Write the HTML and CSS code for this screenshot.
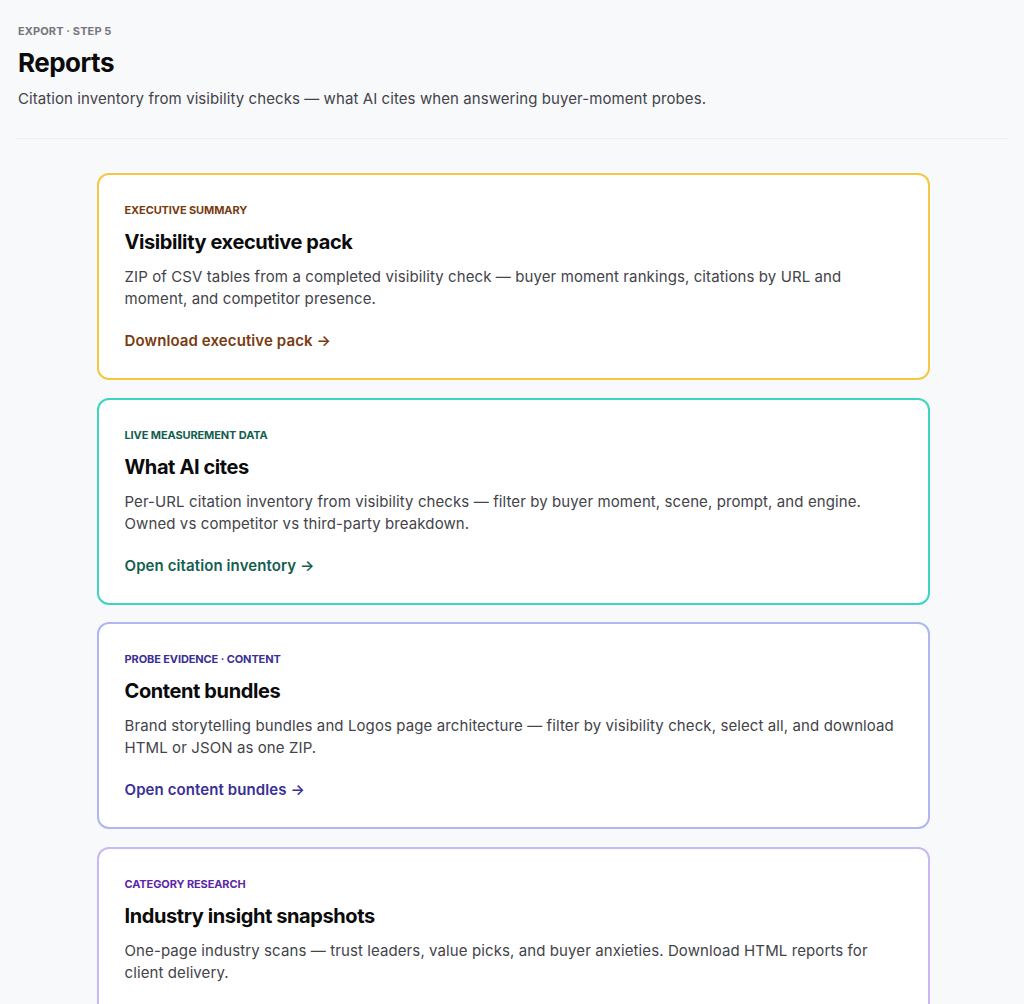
FILE: index.html
```html
<!DOCTYPE html>
<html lang="en">
<head>
  <meta charset="UTF-8">
  <meta name="viewport" content="width=device-width, initial-scale=1.0">
  <title>Reports</title>
  <link rel="stylesheet" href="styles.css">
</head>
<body>
  <div class="page">
    <header class="page-header">
      <div class="eyebrow">Export · Step 5</div>
      <h1>Reports</h1>
      <p class="lead">Citation inventory from visibility checks — what AI cites when answering buyer-moment probes.</p>
    </header>

    <main class="report-list">
      <section class="report-card card-amber">
        <div class="card-tag">Executive summary</div>
        <h2>Visibility executive pack</h2>
        <p>ZIP of CSV tables from a completed visibility check — buyer moment rankings, citations by URL and moment, and competitor presence.</p>
        <a href="#" class="card-link">Download executive pack →</a>
      </section>

      <section class="report-card card-teal">
        <div class="card-tag">Live measurement data</div>
        <h2>What AI cites</h2>
        <p>Per-URL citation inventory from visibility checks — filter by buyer moment, scene, prompt, and engine. Owned vs competitor vs third-party breakdown.</p>
        <a href="#" class="card-link">Open citation inventory →</a>
      </section>

      <section class="report-card card-indigo">
        <div class="card-tag">Probe evidence · Content</div>
        <h2>Content bundles</h2>
        <p>Brand storytelling bundles and Logos page architecture — filter by visibility check, select all, and download HTML or JSON as one ZIP.</p>
        <a href="#" class="card-link">Open content bundles →</a>
      </section>

      <section class="report-card card-violet">
        <div class="card-tag">Category research</div>
        <h2>Industry insight snapshots</h2>
        <p>One-page industry scans — trust leaders, value picks, and buyer anxieties. Download HTML reports for client delivery.</p>
        <a href="#" class="card-link">Open industry snapshots →</a>
      </section>
    </main>
  </div>
</body>
</html>
```

FILE: styles.css
```css
:root {
  --page-bg: #f8f9fb;
  --text-color: #0b0b0c;
  --muted-text: #434349;
  --line-color: #eceef1;
}

body, html {
  margin: 0;
  padding: 0;
  font-family: Inter, 'Noto Sans', sans-serif;
  background-color: var(--page-bg);
  color: var(--text-color);
}

.page {
  padding: 0 16px 40px;
}

/* Page heading */
.page-header {
  padding: 24px 2px 28px;
  border-bottom: 1px solid var(--line-color);
}

.eyebrow {
  font-size: 11px;
  line-height: 14px;
  font-weight: 700;
  letter-spacing: 0.01em;
  text-transform: uppercase;
  color: #75757c;
}

h1 {
  margin: 9px 0 0;
  font-size: 26px;
  line-height: 32px;
  font-weight: 700;
  letter-spacing: -0.02em;
}

.lead {
  margin: 9px 0 0;
  font-size: 15px;
  line-height: 22px;
  letter-spacing: 0.08px;
  color: var(--muted-text);
}

/* Report cards */
.report-list {
  display: flex;
  flex-direction: column;
  gap: 17.5px;
  max-width: 833px;
  margin: 34px auto 0;
  padding-left: 2px;
}

.report-card {
  background: white;
  border: 2px solid;
  border-radius: 12px;
  padding: 28px 26px 26px;
  display: flex;
  flex-direction: column;
}

.card-tag {
  font-size: 11px;
  line-height: 14px;
  font-weight: 700;
  text-transform: uppercase;
  letter-spacing: -0.01em;
}

.report-card h2 {
  margin: 11px 0 0;
  font-size: 20px;
  line-height: 28px;
  font-weight: 700;
  letter-spacing: -0.02em;
}

.report-card p {
  margin: 10px 0 0;
  font-size: 15px;
  line-height: 22px;
  letter-spacing: 0.1px;
  color: var(--muted-text);
}

.card-link {
  align-self: flex-start;
  margin-top: 20px;
  font-size: 15px;
  line-height: 22px;
  font-weight: 600;
  letter-spacing: 0.1px;
  text-decoration: none;
}

.card-link:hover {
  text-decoration: underline;
}

.card-amber { border-color: #f4c744; }
.card-amber .card-tag,
.card-amber .card-link { color: #7a3a10; }

.card-teal { border-color: #3dd5bf; }
.card-teal .card-tag,
.card-teal .card-link { color: #145e50; }

.card-indigo { border-color: #aeb7f0; }
.card-indigo .card-tag,
.card-indigo .card-link { color: #392f96; }

.card-violet { border-color: #c9b8f4; }
.card-violet .card-tag,
.card-violet .card-link { color: #5b26a8; }
```
